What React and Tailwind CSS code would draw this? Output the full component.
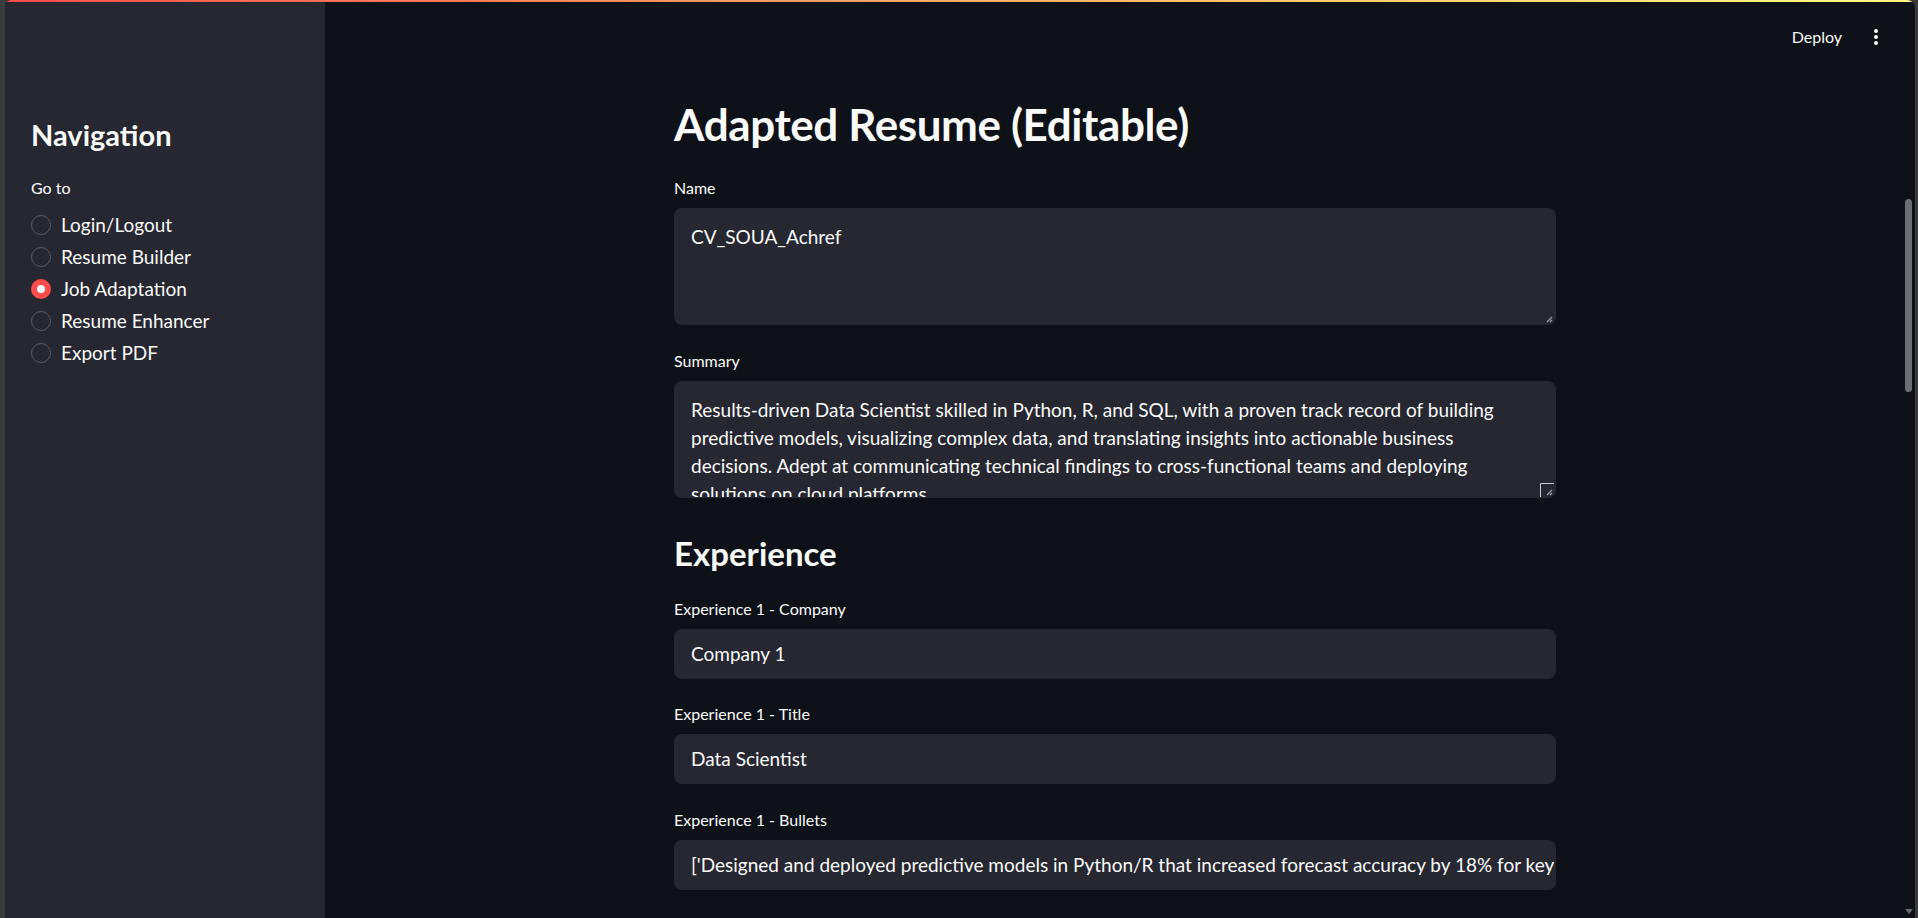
import React from 'react';

const PAGES = ["Login/Logout", "Resume Builder", "Job Adaptation", "Resume Enhancer", "Export PDF"];

const SUMMARY_LINES = [
    "Results-driven Data Scientist skilled in Python, R, and SQL, with a proven track record of building",
    "predictive models, visualizing complex data, and translating insights into actionable business",
    "decisions. Adept at communicating technical findings to cross-functional teams and deploying",
    "solutions on cloud platforms.",
];

const FIELDS = [
    { label: "Experience 1 - Company", value: "Company 1", mt: "mt-[26px]" },
    { label: "Experience 1 - Title", value: "Data Scientist", mt: "mt-[25px]" },
    {
        label: "Experience 1 - Bullets",
        value: "['Designed and deployed predictive models in Python/R that increased forecast accuracy by 18% for key business units', 'Built dashboards']",
        mt: "mt-[26px]",
    },
];

function Radio({ label, checked }) {
    return (
        <div className="flex h-[32px] items-center gap-[10px]">
            {checked ? (
                <span className="flex h-[20px] w-[20px] items-center justify-center rounded-full bg-[#ff4b4b]">
                    <span className="h-[8px] w-[8px] rounded-full bg-white" />
                </span>
            ) : (
                <span className="h-[20px] w-[20px] rounded-full border border-[#595b64]" />
            )}
            <span className="text-[19px] leading-[24px] text-[#fafafa]">{label}</span>
        </div>
    );
}

function Grip({ bracket }) {
    return (
        <svg className="absolute bottom-[1px] right-[2px]" width="14" height="14" viewBox="0 0 14 14">
            {bracket && <path d="M0.5 14V0.5H14" fill="none" stroke="#c8c8cc" strokeWidth="1" />}
            <path d="M7 12L12 7M10 12L12 10" stroke="#9a9aa0" strokeWidth="1.3" />
        </svg>
    );
}

function Label({ children, className = "" }) {
    return <div className={`text-[16px] leading-[20px] text-[#fafafa] mb-[10px] ${className}`}>{children}</div>;
}

export default function App() {
    return (
        <div className="flex h-[918px] w-[1918px] bg-[#3b3b3b] pl-[5px] pr-[3px] font-['Lato',sans-serif] overflow-hidden">
            <div className="flex flex-1 flex-col overflow-hidden rounded-tl-[6px] rounded-tr-[8px] bg-[#0e1117]">
                <div className="h-[2px] bg-linear-to-r from-[#ff4b4b] to-[#fffd80]" />
                <div className="flex flex-1">
                    {/* SIDEBAR */}
                    <aside className="w-[320px] bg-[#262730] pl-[26px] pt-[115px]">
                        <h2 className="text-[29px] leading-[36px] font-bold text-[#fafafa]">Navigation</h2>
                        <div className="mt-[25px] text-[16px] leading-[20px] text-[#fafafa]">Go to</div>
                        <div className="mt-[11px]">
                            {PAGES.map((page) => (
                                <Radio key={page} label={page} checked={page === "Job Adaptation"} />
                            ))}
                        </div>
                    </aside>

                    {/* MAIN */}
                    <main className="flex flex-1">
                        <div className="flex flex-1 flex-col">
                            <header className="flex h-[69px] items-center justify-end gap-[32px] pr-[27px]">
                                <span className="text-[16px] text-[#fafafa]">Deploy</span>
                                <span className="flex flex-col items-center gap-[2px]">
                                    <span className="h-[4px] w-[4px] rounded-full bg-[#fafafa]" />
                                    <span className="h-[4px] w-[4px] rounded-full bg-[#fafafa]" />
                                    <span className="h-[4px] w-[4px] rounded-full bg-[#fafafa]" />
                                </span>
                            </header>

                            <div className="mx-auto w-[882px]">
                                <h1 className="mt-[25px] text-[44px] leading-[56px] font-bold tracking-[-0.4px] text-[#fafafa]">Adapted Resume (Editable)</h1>

                                <Label className="mt-[26px]">Name</Label>
                                <div className="relative h-[117px] rounded-[8px] bg-[#262730] px-[17px] pt-[15px] text-[19px] leading-[28px] text-[#fafafa]">
                                    CV_SOUA_Achref
                                    <Grip />
                                </div>

                                <Label className="mt-[26px]">Summary</Label>
                                <div className="relative h-[117px] overflow-hidden rounded-[8px] bg-[#262730] px-[17px] pt-[15px] text-[19px] leading-[28px] text-[#fafafa]">
                                    <div className="h-[101px] overflow-hidden">
                                        {SUMMARY_LINES.map((line) => (
                                            <div key={line} className="whitespace-nowrap">{line}</div>
                                        ))}
                                    </div>
                                    <Grip bracket />
                                </div>

                                <h2 className="mt-[35px] text-[33px] leading-[40px] font-bold text-[#fafafa]">Experience</h2>

                                {FIELDS.map((field) => (
                                    <div key={field.label} className={field.mt}>
                                        <Label>{field.label}</Label>
                                        <div className="flex h-[50px] items-center overflow-hidden rounded-[8px] bg-[#262730] pl-[17px] pr-[2px] text-[19px] leading-[28px] text-[#fafafa]">
                                            <span className="whitespace-nowrap">{field.value}</span>
                                        </div>
                                    </div>
                                ))}
                            </div>
                        </div>

                        {/* scrollbar */}
                        <div className="flex w-[10px] flex-col pr-[3px]">
                            <div className="mt-[197px] h-[193px] w-[7px] rounded-full bg-[#6d6e72]" />
                            <div className="mt-auto mb-[4px] flex justify-center">
                                <span className="h-0 w-0 border-x-[4px] border-t-[5px] border-x-transparent border-t-[#6d6d6d]" />
                            </div>
                        </div>
                    </main>
                </div>
            </div>
        </div>
    );
}
